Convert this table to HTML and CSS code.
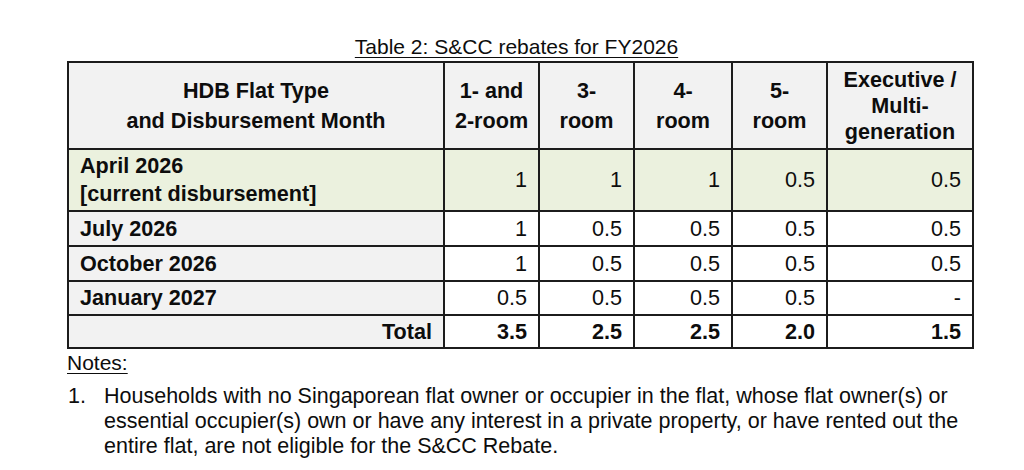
FILE: index.html
```html
<!DOCTYPE html>
<html>
<head>
<meta charset="utf-8">
<link rel="stylesheet" href="styles.css">
</head>
<body>
<div class="page">
  <table class="rebates">
    <caption><span class="title">Table 2: S&amp;CC rebates for FY2026</span></caption>
    <colgroup>
      <col class="c-type">
      <col class="c-n">
      <col class="c-n">
      <col class="c-n4">
      <col class="c-n">
      <col class="c-exec">
    </colgroup>
    <thead>
      <tr class="r-head">
        <th class="h-type">HDB Flat Type<br>and Disbursement Month</th>
        <th>1- and<br>2-room</th>
        <th>3-<br>room</th>
        <th>4-<br>room</th>
        <th>5-<br>room</th>
        <th class="h-exec">Executive /<br>Multi-<br>generation</th>
      </tr>
    </thead>
    <tbody>
      <tr class="r-current">
        <th class="label">April 2026<br>[current disbursement]</th>
        <td>1</td><td>1</td><td>1</td><td>0.5</td><td>0.5</td>
      </tr>
      <tr class="r-a">
        <th class="label">July 2026</th>
        <td>1</td><td>0.5</td><td>0.5</td><td>0.5</td><td>0.5</td>
      </tr>
      <tr class="r-a">
        <th class="label">October 2026</th>
        <td>1</td><td>0.5</td><td>0.5</td><td>0.5</td><td>0.5</td>
      </tr>
      <tr class="r-b">
        <th class="label">January 2027</th>
        <td>0.5</td><td>0.5</td><td>0.5</td><td>0.5</td><td>-</td>
      </tr>
      <tr class="r-total">
        <th class="label total">Total</th>
        <td>3.5</td><td>2.5</td><td>2.5</td><td>2.0</td><td>1.5</td>
      </tr>
    </tbody>
  </table>

  <div class="notes">
    <div class="notes-head">Notes:</div>
    <div class="note">
      <span class="note-num">1.</span>
      <span class="note-text">Households with no Singaporean flat owner or occupier in the flat, whose flat owner(s) or essential occupier(s) own or have any interest in a private property, or have rented out the entire flat, are not eligible for the S&amp;CC Rebate.</span>
    </div>
  </div>
</div>
</body>
</html>
```

FILE: styles.css
```css
html, body {
  margin: 0;
  padding: 0;
  background: #ffffff;
}

body {
  font-family: "Liberation Sans", Arial, sans-serif;
  color: #0d0d0d;
}

.page {
  padding: 35px 0 0 67px;
}

.rebates {
  border-collapse: collapse;
  width: 905px;
  table-layout: fixed;
  font-size: 21.6px;
}

.rebates caption {
  text-align: center;
  font-size: 21px;
  line-height: 24px;
  padding-bottom: 2px;
  padding-right: 8px;
}

.title {
  text-decoration: underline;
  text-underline-offset: 3px;
  text-decoration-thickness: 1px;
}

.c-type { width: 376px; }
.c-n { width: 95px; }
.c-n4 { width: 98px; }
.c-exec { width: 146px; }

.rebates th,
.rebates td {
  border: 2px solid #1c1c1c;
  padding: 0 11px 0 11px;
}

.rebates td {
  text-align: right;
  font-weight: normal;
  line-height: 28px;
}

.r-head th {
  background: #f2f2f2;
  font-weight: bold;
  text-align: center;
  line-height: 30px;
  height: 85px;
  padding: 0 4px;
}

.r-head .h-exec {
  line-height: 26px;
}

.rebates th.label {
  background: #f2f2f2;
  font-weight: bold;
  text-align: left;
  line-height: 28px;
}

.rebates th.total {
  text-align: right;
}

.r-current th.label,
.r-current td {
  background: #ebf1de;
}

.r-current th { height: 60px; }
.r-a th { height: 33px; }
.r-b th { height: 32px; }
.r-total th { height: 31px; }

.r-total td {
  font-weight: bold;
}

.notes {
  font-size: 21.5px;
  line-height: 25px;
  margin-top: 1px;
}

.notes-head {
  display: inline-block;
  font-size: 21px;
  text-decoration: underline;
  text-underline-offset: 3px;
  text-decoration-thickness: 1px;
}

.note {
  display: flex;
  margin-top: 8px;
  padding-left: 1px;
}

.note-num {
  flex: 0 0 36px;
}

.note-text {
  width: 872px;
}
```
